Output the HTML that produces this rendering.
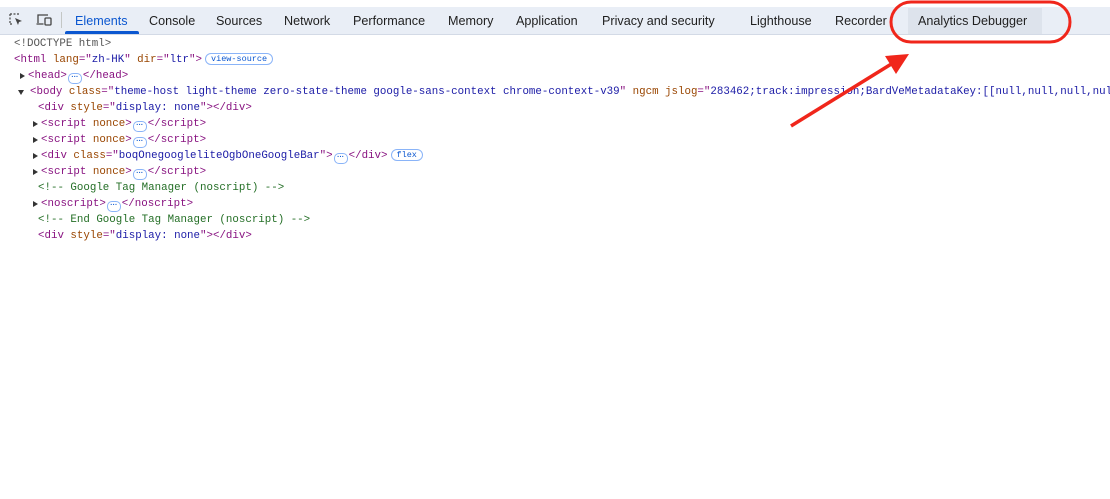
<!DOCTYPE html>
<html><head><style>
body{margin:0;width:1110px;height:499px;background:#fff;position:relative;overflow:hidden;font-family:"Liberation Sans",sans-serif}
.bar{position:absolute;left:0;top:7px;width:1110px;height:27px;background:#e9eef6;border-bottom:1px solid #d3dae6}
.tab{position:absolute;top:14px;font-size:12.6px;color:#1f1f1f;white-space:nowrap}
.sel{color:#0b57d0}
.ul{position:absolute;left:65px;top:31px;width:74px;height:3px;background:#0b57d0;border-radius:2px 2px 0 0}
.hl{position:absolute;left:908px;top:8px;width:134px;height:26px;background:#dde3ec}
.code{position:absolute;left:0;top:36px;font-family:"Liberation Mono",monospace;font-size:10.8px;line-height:16px}
.l{position:relative;height:16px;white-space:pre}
.t{color:#881280}.a{color:#994500}.v{color:#1a1aa6}.c{color:#236e25}.g{color:#555}
.tri{position:absolute;top:5px;width:0;height:0}
.r{border-left:5px solid #333;border-top:3.5px solid transparent;border-bottom:3.5px solid transparent}
.d{border-top:5px solid #333;border-left:3.5px solid transparent;border-right:3.5px solid transparent;top:6px}
.dots{display:inline-block;width:12px;height:9px;border:1px solid #8ab4f8;border-radius:5px;font-size:7px;line-height:7px;text-align:center;color:#0b57d0;vertical-align:-1px;margin:0 1px;font-family:"Liberation Sans",sans-serif;font-weight:bold}
.pill{display:inline-block;border:1px solid #8ab4f8;border-radius:8px;font-size:8.5px;line-height:10px;padding:0 5px;color:#0b57d0;vertical-align:1px;margin-left:3px}
</style></head><body>
<div class="bar"></div>
<div class="hl"></div>
<svg style="position:absolute;left:9px;top:13px" width="16" height="14" viewBox="0 0 16 14"><path d="M1 1h10M1 1v10M1 11h3" stroke="#444" stroke-width="1.2" stroke-dasharray="2 1.5" fill="none"/><path d="M6 5l7 3-3 1-1 3z" fill="#444"/></svg>
<svg style="position:absolute;left:36px;top:13px" width="17" height="14" viewBox="0 0 17 14"><path d="M2 10V2h10M0.5 11h7" stroke="#444" stroke-width="1.3" fill="none"/><rect x="9" y="5" width="6" height="7" rx="1" stroke="#444" stroke-width="1.3" fill="none"/></svg>
<div style="position:absolute;left:61px;top:12px;width:1px;height:16px;background:#c4c7c5"></div>
<div class="ul"></div>
<div class="tab sel" style="left:75px">Elements</div>
<div class="tab" style="left:149px">Console</div>
<div class="tab" style="left:216px">Sources</div>
<div class="tab" style="left:284px">Network</div>
<div class="tab" style="left:353px">Performance</div>
<div class="tab" style="left:448px">Memory</div>
<div class="tab" style="left:516px">Application</div>
<div class="tab" style="left:602px">Privacy and security</div>
<div class="tab" style="left:750px">Lighthouse</div>
<div class="tab" style="left:835px">Recorder</div>
<div class="tab" style="left:918px">Analytics Debugger</div>
<div class="code"><div class="l" style="left:14px"><span class="g">&lt;!DOCTYPE html&gt;</span></div><div class="l" style="left:14px"><span class="t">&lt;html </span><span class="a">lang</span><span class="t">="</span><span class="v">zh-HK</span><span class="t">" </span><span class="a">dir</span><span class="t">="</span><span class="v">ltr</span><span class="t">"&gt;</span><span class="pill">view-source</span></div><div class="l" style="left:28px"><span class="tri r" style="left:-8px"></span><span class="t">&lt;head&gt;</span><span class="dots">···</span><span class="t">&lt;/head&gt;</span></div><div class="l" style="left:30px"><span class="tri d" style="left:-12px"></span><span class="t">&lt;body </span><span class="a">class</span><span class="t">="</span><span class="v">theme-host light-theme zero-state-theme google-sans-context chrome-context-v39</span><span class="t">" </span><span class="a">ngcm jslog</span><span class="t">="</span><span class="v">283462;track:impression;BardVeMetadataKey:[[null,null,null,null</span></div><div class="l" style="left:38px"><span class="t">&lt;div </span><span class="a">style</span><span class="t">="</span><span class="v">display: none</span><span class="t">"&gt;&lt;/div&gt;</span></div><div class="l" style="left:41px"><span class="tri r" style="left:-8px"></span><span class="t">&lt;script </span><span class="a">nonce</span><span class="t">&gt;</span><span class="dots">···</span><span class="t">&lt;/script&gt;</span></div><div class="l" style="left:41px"><span class="tri r" style="left:-8px"></span><span class="t">&lt;script </span><span class="a">nonce</span><span class="t">&gt;</span><span class="dots">···</span><span class="t">&lt;/script&gt;</span></div><div class="l" style="left:41px"><span class="tri r" style="left:-8px"></span><span class="t">&lt;div </span><span class="a">class</span><span class="t">="</span><span class="v">boqOnegoogleliteOgbOneGoogleBar</span><span class="t">"&gt;</span><span class="dots">···</span><span class="t">&lt;/div&gt;</span><span class="pill">flex</span></div><div class="l" style="left:41px"><span class="tri r" style="left:-8px"></span><span class="t">&lt;script </span><span class="a">nonce</span><span class="t">&gt;</span><span class="dots">···</span><span class="t">&lt;/script&gt;</span></div><div class="l" style="left:38px"><span class="c">&lt;!-- Google Tag Manager (noscript) --&gt;</span></div><div class="l" style="left:41px"><span class="tri r" style="left:-8px"></span><span class="t">&lt;noscript&gt;</span><span class="dots">···</span><span class="t">&lt;/noscript&gt;</span></div><div class="l" style="left:38px"><span class="c">&lt;!-- End Google Tag Manager (noscript) --&gt;</span></div><div class="l" style="left:38px"><span class="t">&lt;div </span><span class="a">style</span><span class="t">="</span><span class="v">display: none</span><span class="t">"&gt;&lt;/div&gt;</span></div></div>
<svg style="position:absolute;left:0;top:0" width="1110" height="499">
<rect x="891" y="2" width="179" height="40" rx="20" fill="none" stroke="#f0261b" stroke-width="3"/>
<line x1="791" y1="126" x2="893" y2="63" stroke="#f0261b" stroke-width="3.5"/>
<polygon points="909,54 885,56 896,74" fill="#f0261b"/>
</svg>
</body></html>
